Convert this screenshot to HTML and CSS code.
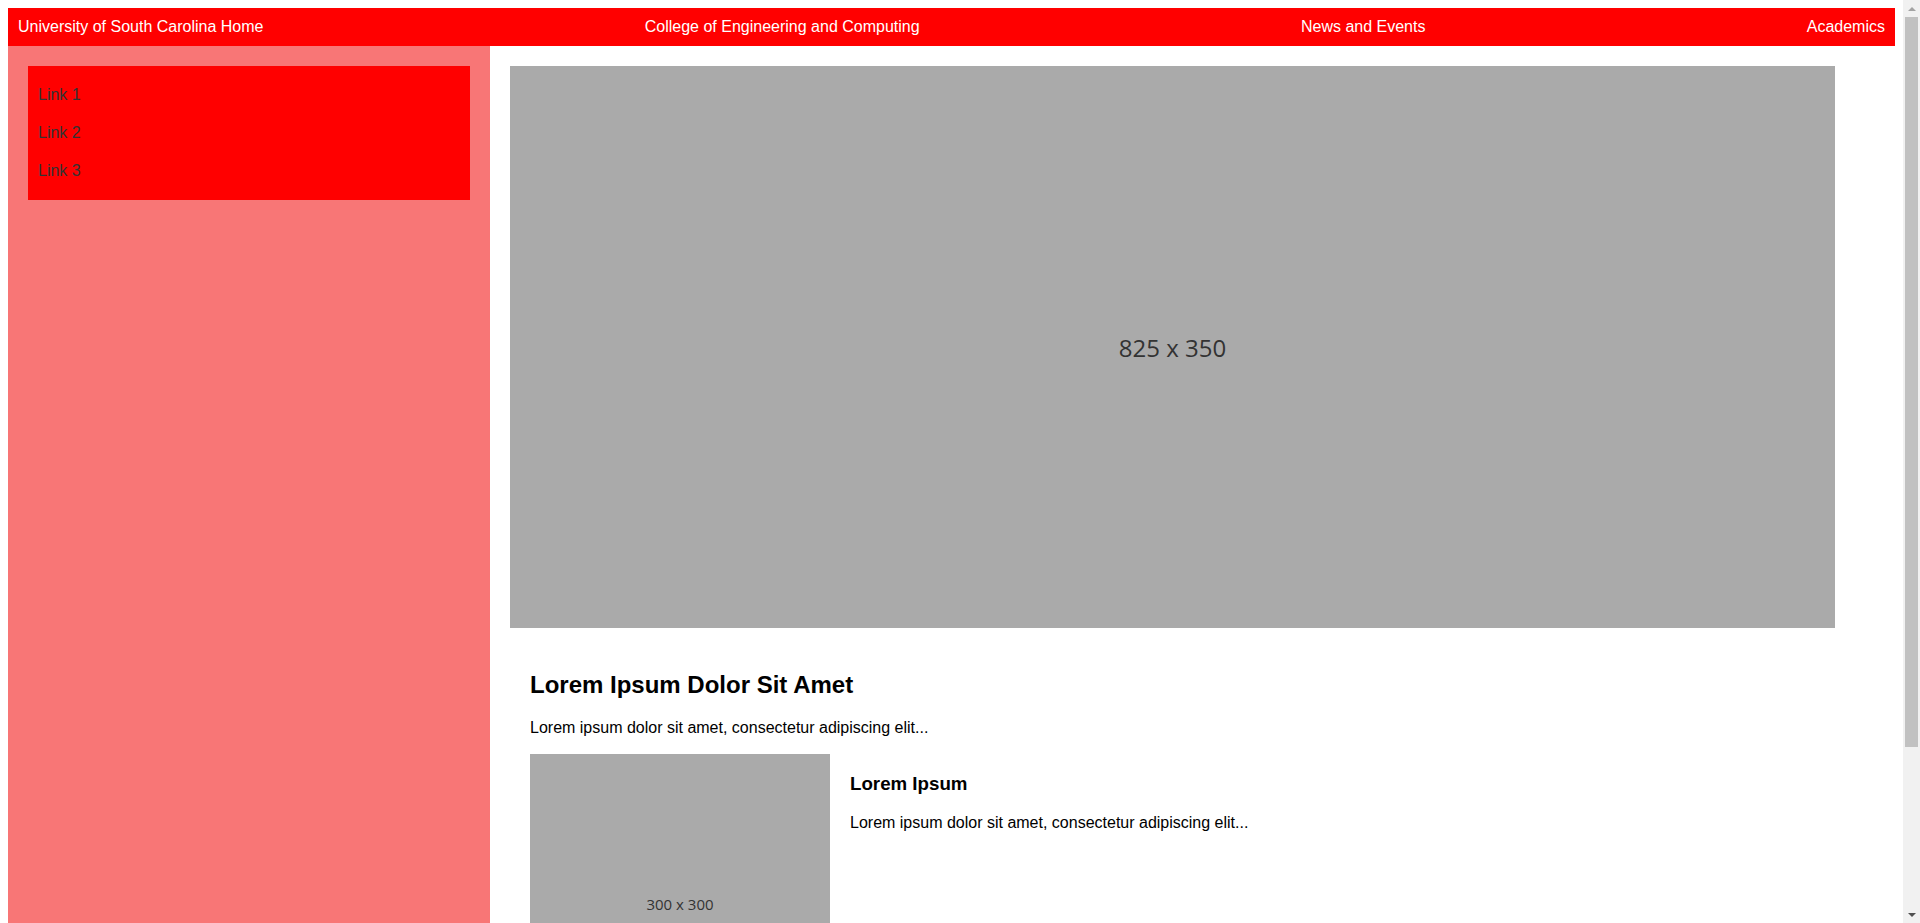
FILE: index.html
```html
<!DOCTYPE html>
<html lang="en">
<head>
<meta charset="utf-8">
<title>College of Engineering and Computing</title>
<link rel="stylesheet" href="styles.css">
</head>
<body>
<nav class="topnav">
  <a href="#">University of South Carolina Home</a>
  <a href="#">College of Engineering and Computing</a>
  <a href="#">News and Events</a>
  <a href="#">Academics</a>
</nav>
<div class="layout">
  <aside class="sidebar">
    <div class="sidelinks">
      <a href="#">Link 1</a>
      <a href="#">Link 2</a>
      <a href="#">Link 3</a>
    </div>
  </aside>
  <main class="main">
    <div class="placeholder hero"><span class="ph-label big">825 x 350</span></div>
    <section class="content">
      <h2 class="title">Lorem Ipsum Dolor Sit Amet</h2>
      <p class="intro">Lorem ipsum dolor sit amet, consectetur adipiscing elit...</p>
      <div class="card">
        <div class="placeholder thumb"><span class="ph-label">300 x 300</span></div>
        <div class="card-body">
          <h3 class="card-title">Lorem Ipsum</h3>
          <p class="card-text">Lorem ipsum dolor sit amet, consectetur adipiscing elit...</p>
        </div>
      </div>
    </section>
  </main>
</div>
<div class="fake-scrollbar" aria-hidden="true">
  <div class="sb-arrow sb-up"></div>
  <div class="sb-track"><div class="sb-thumb"></div></div>
  <div class="sb-arrow sb-down"></div>
</div>
</body>
</html>
```
FILE: styles.css
```css
body {
  margin: 8px 25px 8px 8px;
  font-family: "Liberation Sans", Arial, sans-serif;
  font-size: 16px;
  color: #000;
  background: #fff;
}

.topnav {
  display: flex;
  justify-content: space-between;
  background: #ff0000;
  padding: 10px;
}

.topnav a {
  color: #fff;
  text-decoration: none;
  line-height: 18px;
}

.layout {
  display: flex;
  align-items: stretch;
}

.sidebar {
  width: 482px;
  flex: 0 0 482px;
  box-sizing: border-box;
  padding: 20px;
  background: #f87676;
}

.sidelinks {
  background: #ff0000;
  padding: 10px 10px;
}

.sidelinks a {
  display: block;
  padding: 10px 0;
  line-height: 18px;
  color: #333;
  text-decoration: none;
}

.main {
  flex: 1;
  padding: 20px 60px 42px 20px;
  min-width: 0;
}

.placeholder {
  background: #aaaaaa;
  display: flex;
  align-items: center;
  justify-content: center;
}

.hero {
  width: 100%;
  aspect-ratio: 825 / 350;
}

.ph-label {
  font-family: "Open Sans", "Noto Sans", sans-serif;
  font-size: 15px;
  color: #333;
}

.ph-label.big {
  font-size: 24px;
}

.content {
  padding: 23px 20px 20px;
}

.title {
  font-size: 24px;
  font-weight: bold;
  margin: 20px 0;
}

.intro {
  margin: 20px 0 17px;
}

.card {
  display: flex;
  gap: 20px;
  align-items: flex-start;
}

.thumb {
  width: 300px;
  height: 300px;
  flex: 0 0 300px;
}

.card-body {
  flex: 1;
}

.card-title {
  font-size: 18.72px;
  font-weight: bold;
  margin: 18.72px 0;
}

.card-text {
  margin: 16px 0;
}

/* imitation of the browser's classic vertical scrollbar */
.fake-scrollbar {
  position: fixed;
  top: 0;
  right: 0;
  width: 17px;
  height: 100%;
  background: #f1f1f1;
  display: flex;
  flex-direction: column;
}

.sb-arrow {
  height: 17px;
  flex: 0 0 17px;
  display: flex;
  align-items: center;
  justify-content: center;
}

.sb-up::before {
  content: "";
  border-left: 4px solid transparent;
  border-right: 4px solid transparent;
  border-bottom: 4px solid #a3a3a3;
}

.sb-down::before {
  content: "";
  border-left: 4px solid transparent;
  border-right: 4px solid transparent;
  border-top: 4px solid #505050;
}

.sb-track {
  flex: 1;
  padding: 0 2px;
}

.sb-thumb {
  height: 730px;
  background: #c1c1c1;
}
```
